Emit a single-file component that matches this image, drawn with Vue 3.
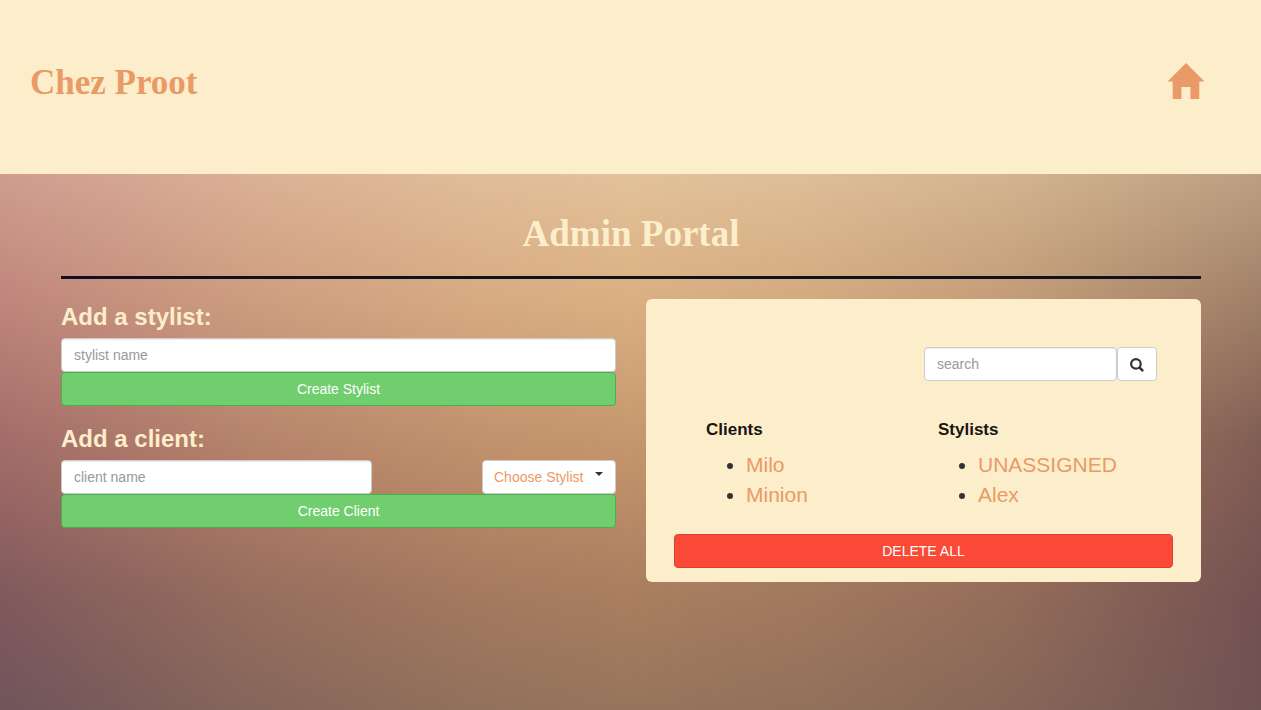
<script setup>
import { ref } from 'vue'

const stylistName = ref('')
const clientName = ref('')
const chosen = ref('')
const query = ref('')
const clients = ['Milo', 'Minion']
const stylists = ['UNASSIGNED', 'Alex']
</script>

<template>
  <div class="page">
    <header class="banner">
      <a href="#" class="brand">Chez Proot</a>
      <a href="#" class="home" aria-label="Home">
        <svg width="38" height="36" viewBox="0 0 38 36" aria-hidden="true">
          <path d="M19 0 37.5 18.5H32.3V36H23.4V24H14.4V36H5.7V18.5H.5Z" fill="#e99a66" />
        </svg>
      </a>
    </header>

    <main class="portal">
      <h1>Admin Portal</h1>
      <hr />
      <div class="columns">
        <div class="forms">
          <form @submit.prevent>
            <h2><label for="stylist">Add a stylist:</label></h2>
            <input id="stylist" v-model="stylistName" class="field" type="text" placeholder="stylist name" />
            <button class="btn create" type="submit">Create Stylist</button>
          </form>
          <form @submit.prevent>
            <h2><label for="client">Add a client:</label></h2>
            <div class="row">
              <input id="client" v-model="clientName" class="field client" type="text" placeholder="client name" />
              <div class="picker">
                <select v-model="chosen" aria-label="Choose Stylist">
                  <option value="">Choose Stylist</option>
                  <option v-for="s in stylists" :key="s" :value="s">{{ s }}</option>
                </select>
                <svg class="caret" width="8" height="4" viewBox="0 0 8 4" aria-hidden="true">
                  <path d="M0 0H8L4 4Z" fill="#333" />
                </svg>
              </div>
            </div>
            <button class="btn create" type="submit">Create Client</button>
          </form>
        </div>

        <section class="card">
          <form class="search" @submit.prevent>
            <input v-model="query" class="field" type="text" placeholder="search" aria-label="search" />
            <button class="go" type="submit" aria-label="Search">
              <svg width="14" height="14" viewBox="0 0 14 14" aria-hidden="true">
                <circle cx="5.9" cy="5.9" r="4.8" fill="none" stroke="#333" stroke-width="2.2" />
                <path d="M9.2 9.2 13.1 13.1" stroke="#333" stroke-width="2.6" />
              </svg>
            </button>
          </form>
          <div class="lists">
            <div>
              <h3>Clients</h3>
              <ul>
                <li v-for="c in clients" :key="c"><a href="#">{{ c }}</a></li>
              </ul>
            </div>
            <div>
              <h3>Stylists</h3>
              <ul>
                <li v-for="s in stylists" :key="s"><a href="#">{{ s }}</a></li>
              </ul>
            </div>
          </div>
          <button class="btn remove" type="button">DELETE ALL</button>
        </section>
      </div>
    </main>
  </div>
</template>

<style>
body {
  margin: 0;
}
</style>

<style scoped>
* {
  box-sizing: border-box;
}

.page {
  display: flex;
  flex-direction: column;
  min-height: 100vh;
  font-family: "Liberation Sans", Arial, sans-serif;
  font-size: 14px;
  line-height: 20px;
  color: #333;
}

a {
  color: #e99a66;
  text-decoration: none;
}

.banner {
  display: flex;
  align-items: flex-start;
  justify-content: space-between;
  padding: 63px 56px 71px 30px;
  background: #fceecb;
}

.brand,
h1 {
  font-family: "Liberation Serif", "Times New Roman", serif;
  font-weight: bold;
  line-height: 40px;
}

.brand {
  font-size: 35px;
}

.home {
  display: flex;
}

/* Soft backdrop: centre tones, with the side tones fading in from each edge */
.portal {
  position: relative;
  isolation: isolate;
  flex: 1;
  padding: 40px 60px 40px 61px;
  background: linear-gradient(#e3c29b 0%, #dfb98e 12%, #dab083 24%, #c4956c 52%, #aa7f60 78%, #97755c 100%);
}

.portal::before,
.portal::after {
  content: "";
  position: absolute;
  inset: 0;
  z-index: -1;
}

.portal::before {
  background: linear-gradient(#cf9c8f 0%, #c0877d 22%, #a36c69 50%, #80595c 79%, #70545b 100%);
  mask-image: linear-gradient(to right, #000 0%, rgba(0, 0, 0, 0.45) 20%, rgba(0, 0, 0, 0.12) 38%, transparent 50%);
}

.portal::after {
  background: linear-gradient(#bb9f81 0%, #a07f67 24%, #805d54 50%, #745152 79%, #6f5253 100%);
  mask-image: linear-gradient(to left, #000 0%, rgba(0, 0, 0, 0.4) 20%, rgba(0, 0, 0, 0.12) 36%, transparent 50%);
}

h1 {
  margin: 0;
  font-size: 37px;
  text-align: center;
  color: #fceecb;
}

hr {
  margin: 22px 0 20px;
  border: 0;
  border-top: 3px solid #10131f;
}

.columns {
  display: grid;
  grid-template-columns: 1fr 1fr;
  gap: 30px;
  align-items: start;
}

.forms {
  display: grid;
  gap: 20px;
}

h2 {
  margin: 0;
  padding: 5px 0 8px;
  font-size: 24px;
  line-height: 26px;
  color: #fceecb;
}

.forms form + form h2 {
  padding-top: 0;
}

.field,
.btn,
select,
.go {
  display: block;
  width: 100%;
  height: 34px;
  margin: 0;
  border: 1px solid #ccc;
  border-radius: 4px;
  background: #fff;
  font: inherit;
}

.field {
  padding: 6px 12px;
  color: #555;
  box-shadow: inset 0 1px 1px rgba(0, 0, 0, 0.08);
}

.field::placeholder {
  color: #999;
  opacity: 1;
}

.btn {
  color: #fff;
  cursor: pointer;
}

.create {
  border-color: #4cae4c;
  background: #71ce6e;
}

.row {
  display: flex;
  justify-content: space-between;
}

.row .client {
  width: 56%;
}

.picker {
  position: relative;
  width: 134px;
}

select {
  appearance: none;
  padding: 0 11px;
  color: #e99a66;
}

.caret {
  position: absolute;
  top: 12px;
  right: 13px;
  pointer-events: none;
}

.card {
  padding: 48px 28px 14px;
  border-radius: 6px;
  background: #fceecb;
}

.search {
  display: flex;
  justify-content: flex-end;
  padding-right: 16px;
}

.search .field {
  width: 193px;
}

.go {
  display: flex;
  align-items: center;
  justify-content: center;
  width: 40px;
  padding: 2px 0 0;
}

.lists {
  display: grid;
  grid-template-columns: 1fr 1fr;
  padding: 39px 3px 24px 32px;
}

h3 {
  margin: 0 0 10px;
  font-size: 17px;
  line-height: 20px;
  color: #1a1412;
}

ul {
  margin: 0;
  padding-left: 40px;
  font-size: 21px;
  line-height: 30px;
}

.remove {
  border-color: #d9403a;
  background: #fb4938;
}
</style>
